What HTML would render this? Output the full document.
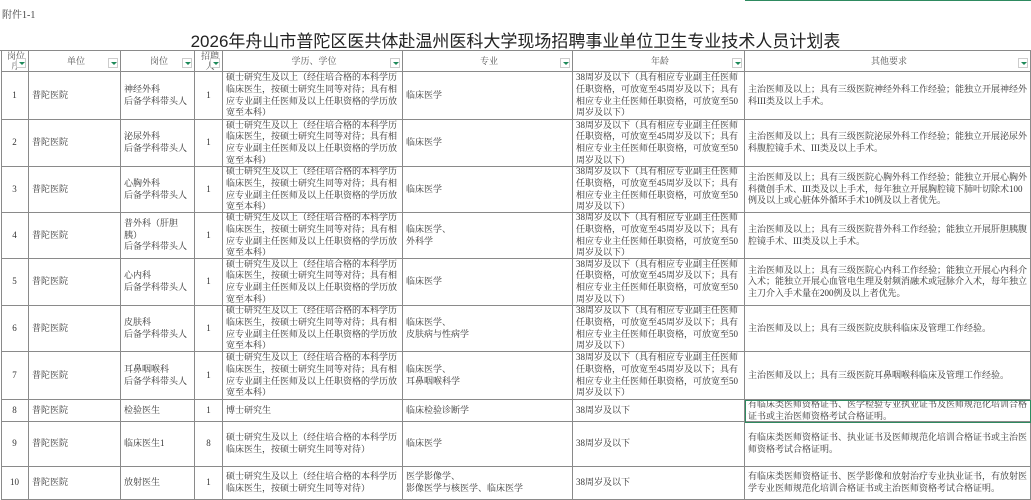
<!DOCTYPE html>
<html><head><meta charset="utf-8"><style>
*{margin:0;padding:0;box-sizing:border-box}
body{width:1031px;height:500px;overflow:hidden;background:#fff;position:relative;font-family:"Liberation Serif","Noto Serif CJK SC",serif;color:#333}
.c{position:absolute;display:flex;align-items:center;font-size:9px;line-height:11.6px;border-right:1px solid #8a8a8a;border-bottom:1px solid #8a8a8a;padding-left:3px;white-space:nowrap;overflow:hidden}
.ctr{justify-content:center;padding-left:0}
.h{justify-content:center;color:#555}
.f{position:absolute;right:2px;bottom:3px;width:10px;height:10px;border:1px solid #ccc;background:#fff}
.f:after{content:"";position:absolute;left:2px;top:3px;border-left:3px solid transparent;border-right:3px solid transparent;border-top:3px solid #1e8a5a}
#t{position:absolute;top:27px;left:0;width:1031px;text-align:center;font-family:"Liberation Sans","Noto Sans CJK SC",sans-serif;font-size:17px;color:#222}
</style></head><body>
<div style="position:absolute;left:2px;top:6px;font-size:10px;color:#444">附件1-1</div>
<div style="position:absolute;left:745px;top:0;width:286px;height:1px;background:#2e8a60"></div>
<div id="t">2026年舟山市普陀区医共体赴温州医科大学现场招聘事业单位卫生专业技术人员计划表</div>
<div style="position:absolute;left:0;top:50px;width:1031px;height:1px;background:#8a8a8a"></div>
<div style="position:absolute;left:1px;top:50px;width:1px;height:450px;background:#8a8a8a"></div>
<div id="g"></div>
<script>
var X=[1,29,121,195,223,403,573,745,1031];
var Y=[50,72,120,167,213,259,306,352,400,422,467,500];
var H=["岗位<br>序","单位","岗位","招聘<br>人","学历、学位","专业","年龄","其他要求"];
var ED="硕士研究生及以上（经住培合格的本科学历<br>临床医生，按硕士研究生同等对待；具有相<br>应专业副主任医师及以上任职资格的学历放<br>宽至本科）";
var ED2="硕士研究生及以上（经住培合格的本科学历<br>临床医生，按硕士研究生同等对待）";
var AG="38周岁及以下（具有相应专业副主任医师<br>任职资格，可放宽至45周岁及以下；具有<br>相应专业主任医师任职资格，可放宽至50<br>周岁及以下）";
var R=[
["1","普陀医院","神经外科<br>后备学科带头人","1",ED,"临床医学",AG,"主治医师及以上；具有三级医院神经外科工作经验；能独立开展神经外<br>科III类及以上手术。"],
["2","普陀医院","泌尿外科<br>后备学科带头人","1",ED,"临床医学",AG,"主治医师及以上；具有三级医院泌尿外科工作经验；能独立开展泌尿外<br>科腹腔镜手术、III类及以上手术。"],
["3","普陀医院","心胸外科<br>后备学科带头人","1",ED,"临床医学",AG,"主治医师及以上；具有三级医院心胸外科工作经验；能独立开展心胸外<br>科微创手术、III类及以上手术，每年独立开展胸腔镜下肺叶切除术100<br>例及以上或心脏体外循环手术10例及以上者优先。"],
["4","普陀医院","普外科（肝胆<br>胰）<br>后备学科带头人","1",ED,"临床医学、<br>外科学",AG,"主治医师及以上；具有三级医院普外科工作经验；能独立开展肝胆胰腹<br>腔镜手术、III类及以上手术。"],
["5","普陀医院","心内科<br>后备学科带头人","1",ED,"临床医学",AG,"主治医师及以上；具有三级医院心内科工作经验；能独立开展心内科介<br>入术；能独立开展心血管电生理及射频消融术或冠脉介入术，每年独立<br>主刀介入手术量在200例及以上者优先。"],
["6","普陀医院","皮肤科<br>后备学科带头人","1",ED,"临床医学、<br>皮肤病与性病学",AG,"主治医师及以上；具有三级医院皮肤科临床及管理工作经验。"],
["7","普陀医院","耳鼻咽喉科<br>后备学科带头人","1",ED,"临床医学、<br>耳鼻咽喉科学",AG,"主治医师及以上；具有三级医院耳鼻咽喉科临床及管理工作经验。"],
["8","普陀医院","检验医生","1","博士研究生","临床检验诊断学","38周岁及以下","有临床类医师资格证书、医学检验专业执业证书及医师规范化培训合格<br>证书或主治医师资格考试合格证明。"],
["9","普陀医院","临床医生1","8",ED2,"临床医学","38周岁及以下","有临床类医师资格证书、执业证书及医师规范化培训合格证书或主治医<br>师资格考试合格证明。"],
["10","普陀医院","放射医生","1",ED2,"医学影像学、<br>影像医学与核医学、临床医学","38周岁及以下","有临床类医师资格证书、医学影像和放射治疗专业执业证书，有放射医<br>学专业医师规范化培训合格证书或主治医师资格考试合格证明。"]
];
var s="";
function cell(x0,x1,y0,y1,html,cls){s+='<div class="c '+cls+'" style="left:'+x0+'px;top:'+y0+'px;width:'+(x1-x0)+'px;height:'+(y1-y0)+'px">'+html+'</div>';}
for(var i=0;i<8;i++){cell(X[i],X[i+1],Y[0],Y[1],'<span style="text-align:center;line-height:10px">'+H[i]+'</span><span class="f"></span>','h');}
for(var r=0;r<R.length;r++){for(var i=0;i<8;i++){cell(X[i],X[i+1],Y[r+1],Y[r+2],'<span>'+R[r][i]+'</span>',(i==0||i==3)?'ctr':'');}}
document.getElementById('g').innerHTML=s;
</script>
<div style="position:absolute;left:745px;top:400px;width:286px;height:23px;border:1px solid #2e8a60"></div>
</body></html>
